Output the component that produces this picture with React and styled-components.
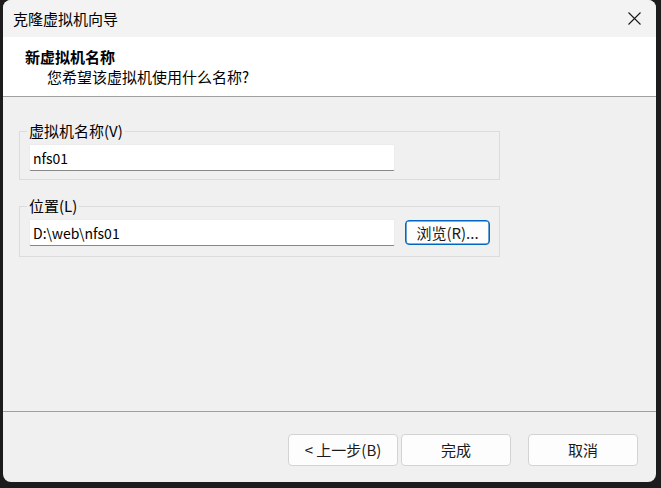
import React from "react";
import styled, { createGlobalStyle } from "styled-components";

const Global = createGlobalStyle`
  html, body { margin: 0; padding: 0; background: #1c1c1c; }
  body { font-family: "Noto Sans CJK SC", "Noto Sans", sans-serif; color: #000; }
  * { box-sizing: border-box; }
`;

const Screen = styled.div`
  width: 661px;
  height: 488px;
  padding-left: 3px;
  background: #1c1c1c;
`;

const Window = styled.div`
  width: 653px;
  height: 482px;
  border-radius: 8px;
  overflow: hidden;
  background: #f0f0f0;
  display: flex;
  flex-direction: column;
`;

const TitleBar = styled.div`
  height: 37px;
  flex: none;
  background: #f3f3f3;
  display: flex;
  align-items: center;
  justify-content: space-between;
  padding: 0 14px 0 10px;
  font-size: 15px;
  line-height: 20px;
`;

const CloseBtn = styled.div`
  width: 16px;
  height: 16px;
  display: flex;
  align-items: center;
  justify-content: center;
`;

const Header = styled.div`
  flex: none;
  height: 60px;
  background: #fff;
  border-bottom: 1px solid #a0a0a0;
  padding: 10px 0 0 22px;
  font-size: 15px;
  line-height: 20px;
`;

const Heading = styled.div`
  font-weight: 700;
`;

const SubHeading = styled.div`
  padding-left: 22px;
`;

const Content = styled.div`
  flex: 1;
  padding: 24px 0 0 16px;
  display: flex;
  flex-direction: column;
  gap: 16px;
`;

const Group = styled.fieldset`
  margin: 0;
  width: 481px;
  min-width: 0;
  border: 1px solid #dcdcdc;
  padding: 3px 8px ${(p) => p.$pb}px 9px;
`;

const Legend = styled.legend`
  padding: 0 2px;
  margin-left: -2px;
  font-size: 15px;
  line-height: 20px;
`;

const Row = styled.div`
  display: flex;
  align-items: center;
  gap: 10px;
`;

const TextInput = styled.input`
  width: 366px;
  height: 27px;
  margin: 0;
  padding: 0 3px;
  border: 1px solid #ececec;
  border-bottom: 1px solid #888;
  border-radius: 2px;
  background: #fff;
  font-family: "Noto Sans CJK SC", "Noto Sans", sans-serif;
  font-size: 14px;
  color: #000;
  outline: none;
`;

const Button = styled.button`
  width: ${(p) => p.$w}px;
  height: ${(p) => p.$h}px;
  margin: 0;
  padding: 0;
  border-radius: 4px;
  background: #fdfdfd;
  border: 1px solid ${(p) => (p.$focus ? "#0067c0" : "#d3d3d3")};
  box-shadow: ${(p) => (p.$focus ? "inset 0 0 0 0.6px #0067c0" : "none")};
  font-family: "Noto Sans CJK SC", "Noto Sans", sans-serif;
  font-size: 15px;
  line-height: 20px;
  color: #1a1a1a;
`;

const Footer = styled.div`
  flex: none;
  height: 71px;
  border-top: 1px solid #a0a0a0;
  display: flex;
  justify-content: flex-end;
  align-items: flex-start;
  padding: 22px 18px 0 0;
`;

const NavGroup = styled.div`
  display: flex;
  gap: 3px;
  margin-right: 17px;
`;

export default function App() {
  return (
    <>
      <Global />
      <Screen>
        <Window>
          <TitleBar>
            <span>克隆虚拟机向导</span>
            <CloseBtn>
              <svg width="13" height="13" viewBox="0 0 13 13">
                <path d="M0.5 0.5 L12.5 12.5 M12.5 0.5 L0.5 12.5" stroke="#1a1a1a" strokeWidth="1.1" fill="none" />
              </svg>
            </CloseBtn>
          </TitleBar>
          <Header>
            <Heading>新虚拟机名称</Heading>
            <SubHeading>您希望该虚拟机使用什么名称?</SubHeading>
          </Header>
          <Content>
            <Group $pb={8}>
              <Legend>虚拟机名称(V)</Legend>
              <TextInput readOnly value="nfs01" />
            </Group>
            <Group $pb={10}>
              <Legend>位置(L)</Legend>
              <Row>
                <TextInput readOnly value="D:\web\nfs01" />
                <Button $w={85} $h={25} $focus>
                  浏览(R)...
                </Button>
              </Row>
            </Group>
          </Content>
          <Footer>
            <NavGroup>
              <Button $w={110} $h={32}>&lt; 上一步(B)</Button>
              <Button $w={110} $h={32}>完成</Button>
            </NavGroup>
            <Button $w={110} $h={32}>取消</Button>
          </Footer>
        </Window>
      </Screen>
    </>
  );
}
